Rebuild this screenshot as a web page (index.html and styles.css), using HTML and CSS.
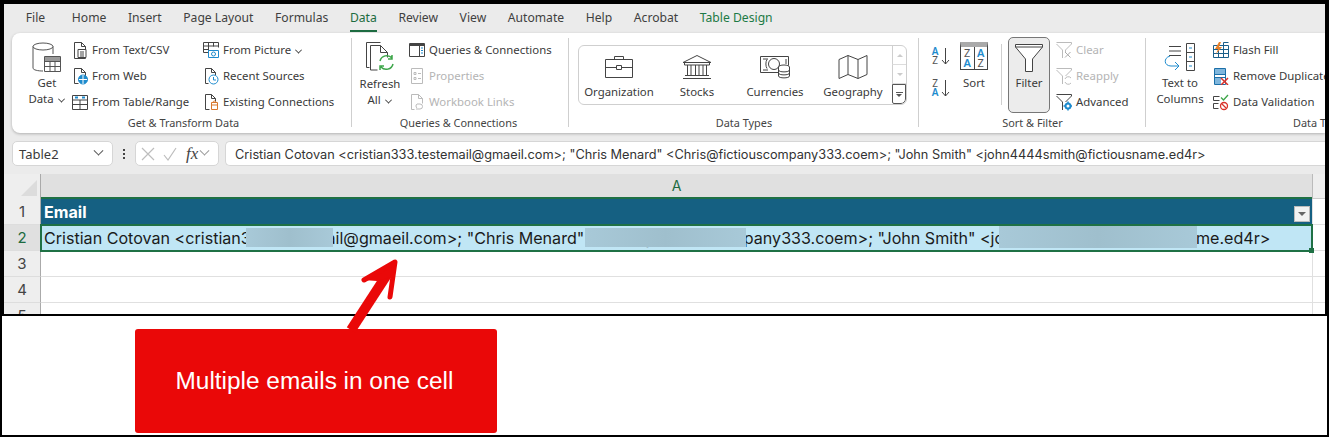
FILE: index.html
```html
<!DOCTYPE html>
<html lang="en">
<head>
<meta charset="utf-8">
<title>Multiple emails in one cell</title>
<link rel="stylesheet" href="styles.css">
</head>
<body>
<div class="frame">
  <div class="shot">
    <nav class="tabs">
      <span class="tab file">File</span><span class="tab">Home</span><span class="tab">Insert</span><span class="tab">Page Layout</span><span class="tab">Formulas</span><span class="tab active">Data</span><span class="tab">Review</span><span class="tab">View</span><span class="tab">Automate</span><span class="tab">Help</span><span class="tab">Acrobat</span><span class="tab context">Table Design</span>
    </nav>
    <div class="ribbon">
      <section class="group g1">
        <div class="gbody">
          <div class="big w42">
            <svg class="i30" viewBox="0 0 30 30" fill="none"><ellipse cx="11" cy="4.500" rx="10" ry="3.500" fill="#fff" stroke="#555"/><path d="M1 4.500V26c0 2 5 3 10 3M21 4.500V12" stroke="#555"/><path d="M12.500 14.500h16v15h-16z" fill="#fff" stroke="#555"/><path d="M13 15h15v4H13z" fill="#999"/><path d="M12.500 24.500h16M12.500 19.500h16M18 19v10M23 19v10" stroke="#555"/></svg>
            <span>Get</span><span>Data <i class="chev"></i></span>
          </div>
          <div class="smcol c127">
            <div class="sm"><svg class="i16" viewBox="0 0 16 18" fill="none" stroke="#444"><path d="M2.500 1.500h7l4 4v12h-11zM9.500 1.500v4h4"/><path d="M6 8.500h8v8H6z" fill="#fff"/><path d="M8 11h4M8 13h4M8 15h4"/></svg><span>From Text/CSV</span></div>
            <div class="sm"><svg class="i16" viewBox="0 0 16 18" fill="none" stroke="#444"><path d="M2.500 1.500h7l4 4v5M2.500 1.500v15h4M9.500 1.500v4h4"/><circle cx="11" cy="12.500" r="4.500" fill="#1e8bcd" stroke="#1e8bcd"/><path d="M7 12.500h8M11 8v9" stroke="#fff"/></svg><span>From Web</span></div>
            <div class="sm"><svg class="i16" viewBox="0 0 16 16" fill="none" stroke="#444"><path d="M.500 1.500h15v14H.500zM.500 6h15M.500 10.500h15M8 6v9.500"/><path d="M3 3.500h3M10 3.500h3" stroke="#1e8bcd" stroke-width="2"/></svg><span>From Table/Range</span></div>
          </div>
          <div class="smcol">
            <div class="sm"><svg class="i16" viewBox="0 0 16 16" fill="none" stroke="#444"><path d="M.500 .500h15v5M.500 .500v10h5M.500 4h15M5.500 .500v10M10.500 .500v4M.500 7.500h5"/><path d="M5.500 8.500h10v7h-10z" fill="#fff" stroke="#1e8bcd"/><circle cx="10.500" cy="12" r="2" stroke="#1e8bcd"/></svg><span>From Picture <i class="chev"></i></span></div>
            <div class="sm"><svg class="i16" viewBox="0 0 16 18" fill="none" stroke="#444"><path d="M2.500 1.500h6l4 4v3M2.500 1.500v15h3M8.500 1.500v4h4"/><circle cx="10.500" cy="12.500" r="4.500" fill="#fff" stroke="#1e8bcd"/><path d="M10.500 10v3h2.500" stroke="#1e8bcd"/></svg><span>Recent Sources</span></div>
            <div class="sm"><svg class="i16" viewBox="0 0 16 18" fill="none" stroke="#444"><path d="M2.500 1.500h6l4 4v3M2.500 1.500v15h4M8.500 1.500v4h4"/><path d="M8.500 9.500h6v7h-6zM8.500 12h6M10 9.500c0-2 3-2 3 0" stroke="#d9782d"/></svg><span>Existing Connections</span></div>
          </div>
        </div>
        <div class="glabel">Get &amp; Transform Data</div>
      </section>
      <section class="group g2">
        <div class="gbody">
          <div class="big w44">
            <svg class="i30" viewBox="0 0 30 30" fill="none" stroke="#444"><path d="M1.500 .500v25h3M1.500 .500h14"/><path d="M5.500 3.500h10l7 7v5M5.500 3.500V28h7M15.500 3.500v7h7"/><path d="M15 19a7 7 0 0 1 12-3M27 13v4h-4M28 22a7 7 0 0 1-12 3M15 28v-4h4" stroke="#3ea64a" stroke-width="1.500"/></svg>
            <span>Refresh</span><span>All <i class="chev"></i></span>
          </div>
          <div class="smcol">
            <div class="sm"><svg class="i16" viewBox="0 0 16 16" fill="none" stroke="#444"><path d="M.500 1.500h15v13H.500zM10.500 1.500v13"/><path d="M1 2h14v1.500H1z" fill="#444"/><path d="M12 6h2M12 8.500h2M12 11h2" stroke="#1e8bcd"/></svg><span>Queries &amp; Connections</span></div>
            <div class="sm off"><svg class="i16" viewBox="0 0 16 18" fill="none" stroke="#bbb"><path d="M2.500 1.500h11v15h-11zM5 5.500h2v2H5zM5 10.500h2v2H5zM9 6.500h3M9 11.500h3"/></svg><span>Properties</span></div>
            <div class="sm off"><svg class="i16" viewBox="0 0 16 18" fill="none" stroke="#bbb"><path d="M2.500 1.500h7l4 4v5M2.500 1.500v15h3M9.500 1.500v4h4"/><path d="M8 15a2.500 2.500 0 0 1 0-4h3M11 11a2.500 2.500 0 0 1 0 5H7"/></svg><span>Workbook Links</span></div>
          </div>
        </div>
        <div class="glabel">Queries &amp; Connections</div>
      </section>
      <section class="group g3">
        <div class="gbody">
          <div class="gallery">
            <div class="gitem"><svg class="gi" viewBox="0 0 30 24" fill="none" stroke="#444"><path d="M1.500 4.500h27v18h-27zM10.500 4.500v-3h9v3M1.500 12.500h11M17.500 12.500h11"/><path d="M12.500 10.500h5v4h-5z"/></svg><span>Organization</span></div>
            <div class="gitem"><svg class="gi" viewBox="0 0 30 24" fill="none" stroke="#444"><path d="M15 .500 1 7.500h28zM2.500 7.500v2.500h25V7.500M5.500 10v10M9 10v10M13.500 10v10M17 10v10M21 10v10M24.500 10v10M3 20.500h24M1 23.500h28"/></svg><span>Stocks</span></div>
            <div class="gitem"><svg class="gi" viewBox="0 0 30 24" fill="none" stroke="#444"><path d="M20 17.500H.500V1.500h28v9M3 4h5M3 15h5M26 4v5"/><path d="M7 4.500c-1.500 2-1.500 7 0 9"/><circle cx="14" cy="9" r="5.500"/><ellipse cx="24" cy="12" rx="5.500" ry="2" fill="#fff"/><path d="M18.500 12v9c0 2.500 11 2.500 11 0v-9M18.500 15c0 2.500 11 2.500 11 0M18.500 18c0 2.500 11 2.500 11 0" fill="#fff"/></svg><span>Currencies</span></div>
            <div class="gitem"><svg class="gi" viewBox="0 0 30 24" fill="none" stroke="#444"><path d="M1 4.500 10 .500l10 4 9-4v19l-9 4-10-4-9 4zM10 .500v19M20 4.500v19"/></svg><span>Geography</span></div>
            <div class="scroller">
              <div class="sbtn"><i class="arr up"></i></div>
              <div class="sbtn"><i class="arr dn"></i></div>
              <div class="sbtn more"><i class="bar"></i><i class="arr dn dark"></i></div>
            </div>
          </div>
        </div>
        <div class="glabel">Data Types</div>
      </section>
      <section class="group g4">
        <div class="gbody">
          <div class="sortcol">
            <div class="az"><span class="letters"><b>A</b><em>Z</em></span><svg class="down" viewBox="0 0 9 18" fill="none" stroke="#444"><path d="M4.500 1v16M1 13l3.500 4L8 13"/></svg></div>
            <div class="az"><span class="letters"><em>Z</em><b>A</b></span><svg class="down" viewBox="0 0 9 18" fill="none" stroke="#444"><path d="M4.500 1v16M1 13l3.500 4L8 13"/></svg></div>
          </div>
          <div class="big w40">
            <div class="sorticon"><div class="sc"><em>Z</em><b>A</b></div><div class="sc"><b>A</b><em>Z</em></div></div>
            <span>Sort</span>
          </div>
          <div class="sep"></div>
          <div class="filter">
            <svg class="i30" viewBox="0 0 30 30" fill="none" stroke="#444"><path d="M1.500 1.500h27V4L18.500 16v12.500h-7V16L1.500 4z" fill="#fff"/><path d="M1.500 4h27"/></svg>
            <span>Filter</span>
          </div>
          <div class="smcol c-filter">
            <div class="sm off"><svg class="i16" viewBox="0 0 16 18" fill="none" stroke="#bbb"><path d="M.500 1.500h15v1.500L9.500 9v3M.500 3l6 6v8"/><path d="M9 11l5.500 5.500M14.500 11 9 16.500" stroke="#aaa"/></svg><span>Clear</span></div>
            <div class="sm off"><svg class="i16" viewBox="0 0 16 18" fill="none" stroke="#bbb"><path d="M.500 1.500h15v1.500L9.500 9M.500 3l6 6v8"/><path d="M9 12a3.500 3.500 0 0 1 6-1M15 16a3.500 3.500 0 0 1-6-1"/></svg><span>Reapply</span></div>
            <div class="sm"><svg class="i16" viewBox="0 0 16 18" fill="none" stroke="#444"><path d="M.500 1.500h15v1.500L9.500 9M.500 3l6 6v8"/><circle cx="12" cy="13" r="2.500" stroke="#1e8bcd" stroke-width="2"/><path d="M12 8.500v2M12 15.500v2M7.500 13h2M14.500 13h2" stroke="#1e8bcd" stroke-width="1.500"/></svg><span>Advanced</span></div>
          </div>
        </div>
        <div class="glabel">Sort &amp; Filter</div>
      </section>
      <section class="group g5">
        <div class="gbody">
          <div class="big w66">
            <svg class="i30w" viewBox="0 0 32 28" fill="none" stroke="#444"><path d="M5 3.500h12M5 8h12M5 12.500h12"/><path d="M22.500 .500h8v27h-8zM22.500 9.500h8M22.500 18.500h8"/><path d="M25 5h3M25 14h3M25 23h3" stroke="#1e8bcd"/><path d="M6 15C-1 17 0 25 7 25h8M11 21l4 4-4 4" stroke="#1e8bcd" transform="translate(0 -2)"/></svg>
            <span>Text to</span><span>Columns</span>
          </div>
          <div class="smcol">
            <div class="sm"><svg class="i16" viewBox="0 0 16 16" fill="none" stroke="#444"><path d="M.500 3.500h15v12H.500zM5.500 3.500v12M10.500 .500v15M15.500 .500h-5M.500 7.500h15M.500 11.500h15" stroke="#1b5f8a"/><path d="M6 0 2 7h3L3 12l6-7H6l2-5z" fill="#e8812a" stroke="none"/></svg><span>Flash Fill</span></div>
            <div class="sm"><svg class="i16" viewBox="0 0 16 18" fill="none"><path d="M1.500 1.500h11v16h-11z" stroke="#1b6fa8"/><path d="M2 2h10v5H2zM2 11h6v6H2z" fill="#7fb6dc"/><path d="M1.500 7.500h11M1.500 10.500h11" stroke="#1b6fa8"/><path d="M8 11l7 7M15 11l-7 7" stroke="#d8322a" stroke-width="1.500"/></svg><span>Remove Duplicates</span></div>
            <div class="sm"><svg class="i16" viewBox="0 0 16 16" fill="none" stroke="#444"><path d="M.500 2.500h6M.500 2.500v4h6M.500 9.500h5M.500 9.500v5h5"/><path d="M8 3.500l2.500 2.500L15 1" stroke="#3ea64a" stroke-width="1.300"/><circle cx="11" cy="12" r="3.500" stroke="#d8322a" stroke-width="1.300"/><path d="M8.500 9.500l5 5" stroke="#d8322a" stroke-width="1.300"/></svg><span>Data Validation</span></div>
          </div>
        </div>
        <div class="glabel">Data Tools</div>
      </section>
    </div>
    <div class="fbar">
      <div class="namebox"><span>Table2</span><i class="chev lg"></i></div>
      <div class="dots"><i></i><i></i><i></i></div>
      <div class="fxbox">
        <svg class="x" viewBox="0 0 14 14" fill="none" stroke="#bdbdbd" stroke-width="1.200"><path d="M1 1l12 12M13 1 1 13"/></svg>
        <svg class="x" viewBox="0 0 14 14" fill="none" stroke="#bdbdbd" stroke-width="1.200"><path d="M1 8l4 5L13 1"/></svg>
        <span class="fx">fx</span><i class="chev lg soft"></i>
      </div>
      <div class="finput">Cristian Cotovan &lt;cristian333.testemail@gmaeil.com&gt;; "Chris Menard" &lt;Chris@fictiouscompany333.coem&gt;; "John Smith" &lt;john4444smith@fictiousname.ed4r&gt;</div>
    </div>
    <div class="sheet">
      <div class="corner"><i></i></div><div class="colhead">A</div><div class="colrest"></div>
      <div class="rowhead">1</div>
      <div class="cell thead"><span>Email</span><div class="fbtn"><i></i></div></div>
      <div class="blank"></div>
      <div class="rowhead cur">2</div>
      <div class="cell sel">
        <span>Cristian Cotovan &lt;cristian333.testemail@gmaeil.com&gt;; "Chris Menard" &lt;Chris@fictiouscompany333.coem&gt;; "John Smith" &lt;john4444smith@fictiousname.ed4r&gt;</span>
        <div class="blur b1"></div><div class="blur b2"></div><div class="blur b3"></div>
        <div class="handle"></div>
      </div>
      <div class="blank"></div>
      <div class="rowhead">3</div><div class="cell"></div><div class="blank"></div>
      <div class="rowhead">4</div><div class="cell"></div><div class="blank"></div>
      <div class="rowhead">5</div><div class="cell"></div><div class="blank"></div>
    </div>
  </div>
  <div class="callout">Multiple emails in one cell</div>
  <svg class="arrow" viewBox="0 0 70 80" fill="none"><path d="M11 75 50 15" stroke="#ea0808" stroke-width="10"/><path d="M55 7 23 25l14 1 14-4-1 20z" fill="#ea0808"/><path d="M24 25 55 7l-5 35" stroke="#ea0808" stroke-width="5" stroke-linecap="round" stroke-linejoin="round"/></svg>
</div>
</body>
</html>
```

FILE: styles.css
```css
* { box-sizing: border-box; }
html, body { margin: 0; padding: 0; background: #fff; }
body { font-family: "Noto Sans", sans-serif; font-size: 11.400px; color: #3a3a3a; overflow: hidden; }
i, em { font-style: normal; }
svg { display: block; flex: none; }

.frame { position: relative; width: 1329px; height: 437px; border: 2px solid #000; overflow: hidden; }
.shot { height: 314px; border: 2px solid #000; background: #ebebeb; overflow: hidden; }

.tabs { display: flex; height: 29px; padding: 0 0 2px 11px; font-size: 12.150px; align-items: center; }
.tab { position: relative; padding: 0 10.800px; line-height: 27px; color: #3f3f3f; white-space: nowrap; }
.tab.file { padding-right: 15.800px; }
.tab.active { color: #1d6b41; }
.tab.active::after { content: ""; position: absolute; left: 11px; right: 11px; bottom: -1px; height: 2px; background: #1d6b41; }
.tab.context { color: #1d7a45; }

.ribbon { display: flex; height: 100px; margin-left: 8px; background: #fff; border-radius: 8px 0 0 8px; box-shadow: 0 1px 3px rgba(0,0,0,.25); overflow: hidden; }
.group { position: relative; display: flex; flex-direction: column; flex: none; height: 100%; padding-top: 4px; }
.group::after { content: ""; position: absolute; right: 0; top: 5px; bottom: 6px; width: 1px; background: #cfcfcf; }
.g1 { width: 340px; }
.g2 { width: 217px; }
.g3 { width: 350px; }
.g4 { width: 227px; }
.g5 { width: 360px; }
.g5::after { display: none; }
.gbody { display: flex; height: 78px; }
.g1 .gbody { padding-left: 14px; gap: 4px; }
.g2 .gbody { padding-left: 6px; gap: 7px; }
.g3 .gbody { padding: 8px 0 0 9px; }
.g4 .gbody { padding-left: 11px; }
.g5 .gbody { padding-left: 0; }
.glabel { height: 18px; line-height: 16px; text-align: center; font-size: 10.900px; color: #444; white-space: nowrap; }
.g1 .glabel { padding-left: 3px; }
.g2 .glabel { padding-right: 4px; }
.g5 .glabel { text-align: left; margin-left: 147px; }

.big { display: flex; flex-direction: column; align-items: center; padding-top: 5px; line-height: 16px; flex: none; white-space: nowrap; }
.big .i30, .big .i30w { margin-bottom: 3px; }
.g2 .big .i30 { margin-bottom: 4px; }
.w42 { width: 42px; }
.w44 { width: 44px; }
.w40 { width: 40px; margin-left: 3px; }
.w66 { width: 66px; margin-left: 1px; }
.i30 { width: 30px; height: 30px; }
.i30w { width: 32px; height: 30px; }
.i16 { width: 16px; height: 18px; }
.chev { display: inline-block; width: 5px; height: 5px; border-right: 1px solid #444; border-bottom: 1px solid #444; transform: rotate(45deg) translate(-1px,-1px); margin: 0 2px; }
.chev.lg { width: 7px; height: 7px; border-color: #555; }
.chev.soft { border-color: #999; }

.smcol { display: flex; flex-direction: column; flex: none; }
.c127 { width: 127px; }
.sm { display: flex; align-items: center; gap: 4px; height: 26px; white-space: nowrap; }
.sm span { margin-bottom: 2px; }
.sm.off { color: #b4b4b4; }

.gallery { display: flex; width: 329px; height: 60px; border: 1px solid #cfcfcf; border-radius: 6px; padding-left: 1px; overflow: hidden; position: relative; }
.gitem { width: 78px; flex: none; display: flex; flex-direction: column; align-items: center; padding-top: 9px; line-height: 16px; }
.gi { width: 30px; height: 24px; margin-bottom: 5px; }
.scroller { margin-left: auto; width: 14px; display: flex; flex-direction: column; }
.sbtn { flex: 1; border-left: 1px solid #cfcfcf; border-bottom: 1px solid #dcdcdc; display: flex; flex-direction: column; align-items: center; justify-content: center; gap: 1px; }
.sbtn.more { border: 1px solid #555; border-radius: 0 0 5px 2px; }
.arr { width: 0; height: 0; border-left: 3px solid transparent; border-right: 3px solid transparent; }
.arr.up { border-bottom: 3px solid #ccc; }
.arr.dn { border-top: 3px solid #ccc; }
.arr.dark { border-top-color: #555; }
.bar { width: 7px; height: 1px; background: #555; }

.sortcol { width: 21px; flex: none; display: flex; flex-direction: column; padding-top: 10px; gap: 14px; }
.az { display: flex; height: 18px; align-items: stretch; gap: 1px; }
.letters { display: flex; flex-direction: column; font-size: 10px; line-height: 9px; width: 10px; text-align: center; }
.letters b, .sc b { color: #1e8bcd; font-weight: 600; }
.letters em, .sc em { color: #555; }
.down { width: 9px; height: 18px; }
.sorticon { display: flex; width: 28px; height: 28px; border: 1px solid #444; border-top: 5px solid #aaa; margin-bottom: 5px; }
.sc { flex: 1; display: flex; flex-direction: column; align-items: center; font-size: 11px; line-height: 10px; padding-top: 1px; }
.sc + .sc { border-left: 1px solid #444; }
.sep { width: 1px; height: 61px; margin: 7px 6px 0 7px; background: #cfcfcf; flex: none; }
.filter { width: 42px; height: 76px; flex: none; display: flex; flex-direction: column; align-items: center; padding-top: 5px; background: #ececec; border: 1px solid #777; border-radius: 5px; line-height: 16px; }
.filter .i30 { margin-bottom: 2px; }
.c-filter { margin-left: 6px; }

.fbar { display: flex; height: 25px; margin: 8px 0 8px 8px; align-items: stretch; }
.namebox { width: 101px; background: #fff; border: 1px solid #d6d6d6; border-radius: 5px; display: flex; align-items: center; justify-content: space-between; padding: 0 8px 0 6px; font-size: 13px; }
.namebox .chev, .fxbox .chev { transform: rotate(45deg) translate(-2px,-2px); }
.dots { width: 22px; display: flex; flex-direction: column; align-items: center; justify-content: center; gap: 2px; }
.dots i { width: 2px; height: 2px; background: #444; }
.fxbox { width: 84px; background: #fff; border: 1px solid #d6d6d6; border-radius: 5px; display: flex; align-items: center; padding-left: 5px; gap: 8px; }
.x { width: 14px; height: 14px; }
.fx { font-family: "Liberation Serif", serif; font-style: italic; font-size: 17px; color: #444; margin-left: 1px; }
.fxbox .chev { margin-left: -5px; }
.finput { flex: 1; margin-left: 6px; background: #fff; border: 1px solid #d6d6d6; border-right: 0; border-radius: 5px 0 0 5px; padding-left: 9px; line-height: 25px; font-family: "Inter", sans-serif; font-size: 12.740px; color: #333; white-space: nowrap; overflow: hidden; }

.sheet { display: grid; grid-template-columns: 37px 1271px 1fr; grid-template-rows: 25px 26px 26px 26px 26px 26px; background: #fff; font-family: "Inter", sans-serif; }
.corner { background: #eee; border-right: 1px solid #aaa; position: relative; }
.corner i { position: absolute; right: 3px; bottom: 3px; width: 0; height: 0; border-left: 16px solid transparent; border-bottom: 16px solid #dcdcdc; }
.colhead { background: #e0e0e0; color: #1d6b41; text-align: center; line-height: 23px; font-size: 14px; border-bottom: 2px solid #1f7145; }
.colrest { background: #eee; border-left: 1px solid #bbb; border-bottom: 1px solid #ccc; }
.rowhead { background: #eee; border-right: 1px solid #aaa; border-bottom: 1px solid #ddd; text-align: center; font-size: 15px; line-height: 25px; color: #444; }
.rowhead.cur { background: #e0e0e0; color: #1d6b41; }
.cell { position: relative; background: #fff; border-bottom: 1px solid #e0e0e0; font-size: 16.100px; white-space: nowrap; }
.blank { border-bottom: 1px solid #e0e0e0; border-left: 1px solid #e0e0e0; }
.thead { background: #156082; color: #fff; font-weight: 700; line-height: 27px; padding-left: 3px; border-bottom: 0; }
.fbtn { position: absolute; right: 2px; top: 7px; width: 16px; height: 16px; background: #f2f2f2; border: 1px solid #bbb; display: flex; align-items: center; justify-content: center; }
.fbtn i { width: 0; height: 0; border-left: 4px solid transparent; border-right: 4px solid transparent; border-top: 4px solid #666; }
.sel { background: #c0e6f5; color: #1b1b1b; line-height: 27px; padding-left: 3px; outline: 2px solid #1f7145; outline-offset: -1px; z-index: 1; box-shadow: inset 0 0 0 1px #fff; border-bottom: 0; }
.blur { position: absolute; top: 3px; height: 19px; background: linear-gradient(90deg, #a8c9d8, #9fbfcd 50%, #a8c9d8); }
.b1 { left: 205px; width: 87px; }
.b2 { left: 544px; width: 161px; }
.b3 { left: 958px; width: 198px; top: 1px; height: 22px; }
.handle { position: absolute; right: -2px; bottom: -2px; width: 5px; height: 5px; background: #1f7145; }

.callout { width: 362px; height: 104px; margin: 13px 0 0 133px; background: #ea0808; border-radius: 3px; color: #fff; font-family: "Liberation Sans", sans-serif; font-size: 24.400px; padding-right: 3px; display: flex; align-items: center; justify-content: center; }
.arrow { position: absolute; left: 338px; top: 253px; width: 70px; height: 80px; }
```
